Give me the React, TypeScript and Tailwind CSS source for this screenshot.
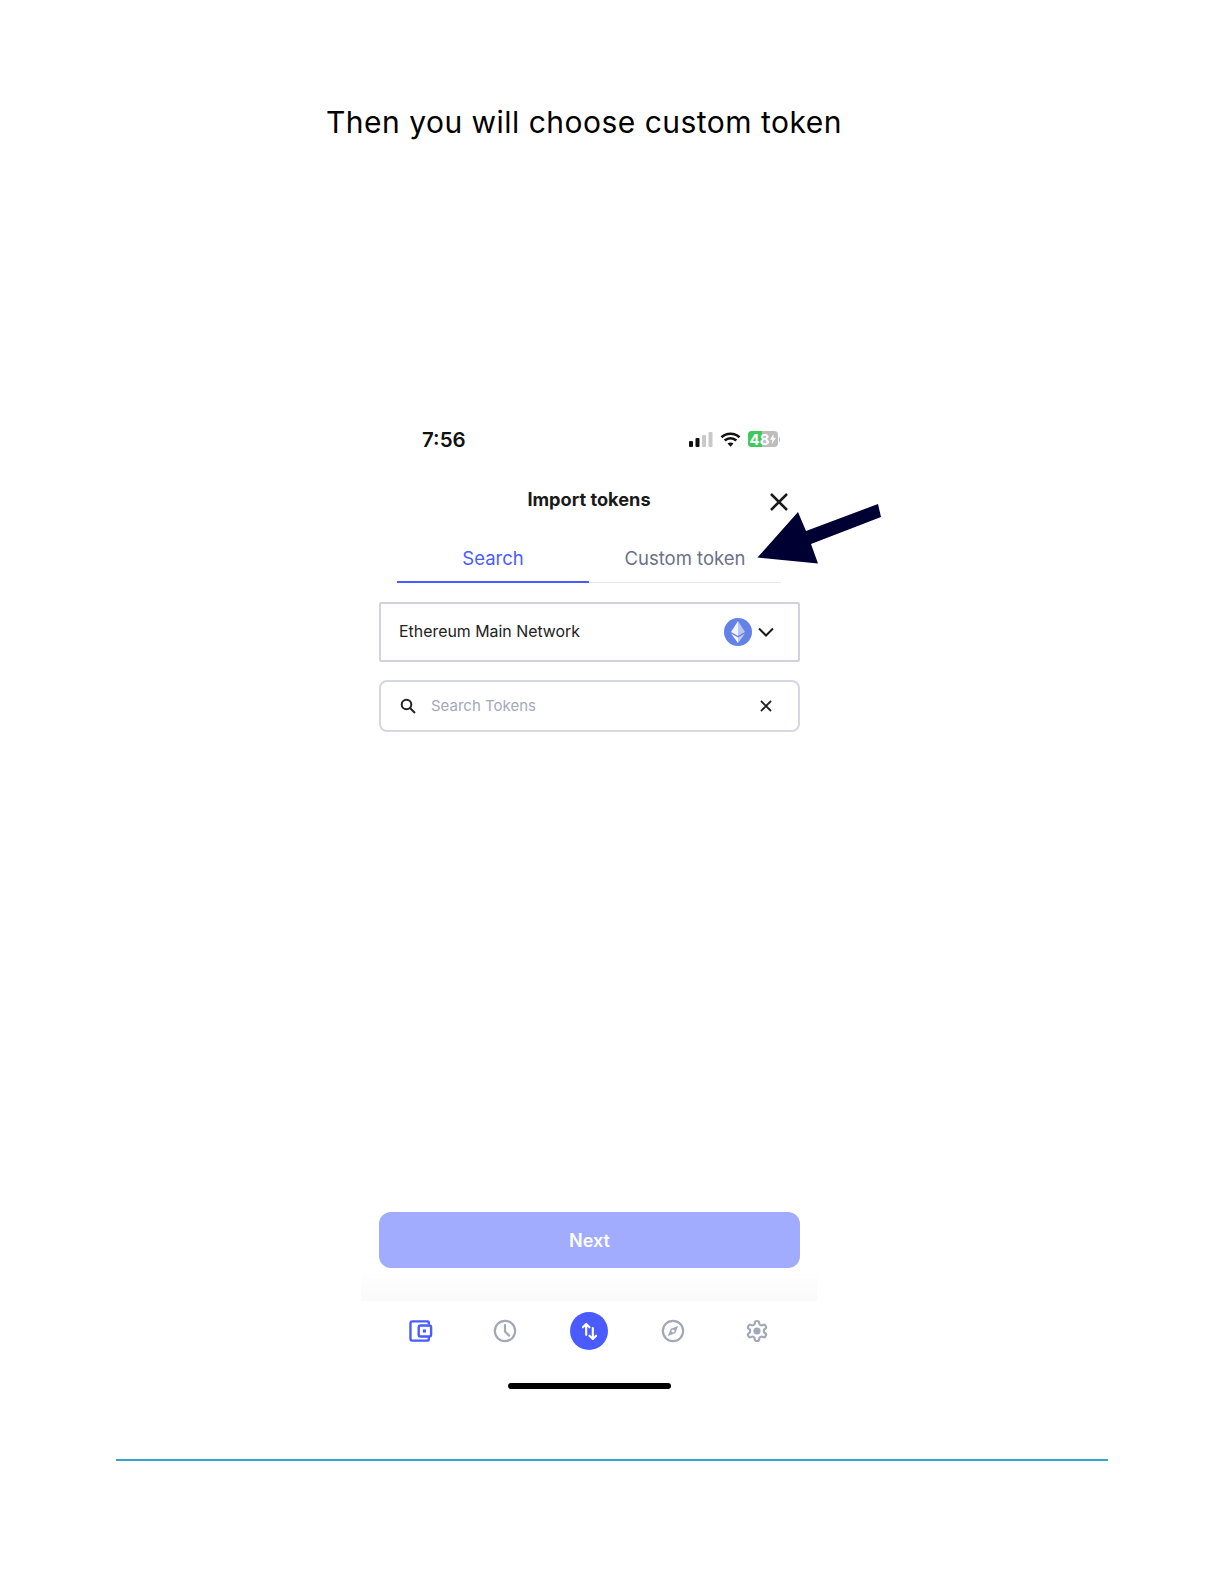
const appFont = { fontFamily: '"Inter", "Noto Sans", sans-serif' };

const NavIcons = () => (
  <div className="mx-[18px] grid h-[60px] grid-cols-5 items-center justify-items-center">
    <svg width="24" height="22" viewBox="0 0 26 24" fill="none" stroke="#4a5cff" strokeWidth="2.600">
      <path d="M21.500 5V2.500a1 1 0 0 0-1-1H3.500a2 2 0 0 0-2 2v17a2 2 0 0 0 2 2h17a1 1 0 0 0 1-1V18" />
      <rect x="10.500" y="6" width="13.500" height="12" rx="2" />
      <rect x="15" y="10.300" width="3.400" height="3.400" fill="#4a5cff" stroke="none" />
    </svg>
    <svg width="24" height="24" viewBox="0 0 26 26" fill="none" stroke="#a3a8b8" strokeWidth="2.400">
      <circle cx="13" cy="13" r="11" />
      <path d="M13 6.500V13.500L17.500 18" strokeLinecap="round" />
    </svg>
    <div className="flex h-[38px] w-[38px] items-center justify-center rounded-full bg-[#4a5cff]">
      <svg width="15" height="19" viewBox="0 0 18 22" fill="none" stroke="#ffffff" strokeWidth="2.600" strokeLinecap="round" strokeLinejoin="round">
        <path d="M5 15V2M1 6L5 2L9 6" />
        <path d="M13 7V20M9 16L13 20L17 16" />
      </svg>
    </div>
    <svg width="24" height="24" viewBox="0 0 26 26" fill="none" stroke="#a3a8b8" strokeWidth="2.400">
      <circle cx="13" cy="13" r="11" />
      <path d="M18.500 7.500L15.500 15.500L7.500 18.500L10.500 10.500Z" fill="#a3a8b8" stroke="none" />
      <circle cx="13" cy="13" r="1.700" fill="#ffffff" stroke="none" />
    </svg>
    <svg width="24" height="24" viewBox="0 0 24 24" fill="none" stroke="#a3a8b8" strokeWidth="2.200">
      <path d="M12.220 2h-.44a2 2 0 0 0-2 2v.18a2 2 0 0 1-1 1.730l-.43.25a2 2 0 0 1-2 0l-.15-.08a2 2 0 0 0-2.730.73l-.22.38a2 2 0 0 0 .73 2.730l.15.1a2 2 0 0 1 1 1.720v.51a2 2 0 0 1-1 1.740l-.15.09a2 2 0 0 0-.73 2.730l.22.38a2 2 0 0 0 2.730.73l.15-.08a2 2 0 0 1 2 0l.43.25a2 2 0 0 1 1 1.730V20a2 2 0 0 0 2 2h.44a2 2 0 0 0 2-2v-.18a2 2 0 0 1 1-1.730l.43-.25a2 2 0 0 1 2 0l.15.08a2 2 0 0 0 2.730-.73l.22-.39a2 2 0 0 0-.73-2.730l-.15-.08a2 2 0 0 1-1-1.740v-.5a2 2 0 0 1 1-1.740l.15-.09a2 2 0 0 0 .73-2.730l-.22-.38a2 2 0 0 0-2.730-.73l-.15.08a2 2 0 0 1-2 0l-.43-.25a2 2 0 0 1-1-1.730V4a2 2 0 0 0-2-2z" />
      <circle cx="12" cy="12" r="3.600" fill="#a3a8b8" stroke="none" />
    </svg>
  </div>
);

const StatusBar = () => (
  <div className="flex h-[30px] items-center justify-between pl-[61px] pr-[37px]">
    <span className="text-[20.500px] font-semibold text-[#111111]">7:56</span>
    <div className="mb-[2px] flex items-center">
      <svg width="24" height="15" viewBox="0 0 24 15" fill="#111111">
        <rect x="0" y="9" width="4" height="6" rx="1" />
        <rect x="6.500" y="6" width="4" height="9" rx="1" />
        <rect x="13" y="3" width="4" height="12" rx="1" fill="#c9c9c9" />
        <rect x="19.500" y="0" width="4" height="15" rx="1" fill="#c9c9c9" />
      </svg>
      <svg className="ml-[7px] mr-[1px]" width="21" height="15" viewBox="0 0 20 15" fill="none" stroke="#111111" strokeWidth="2.700">
        <path d="M1 5.200C6 .6 14 .6 19 5.200" />
        <path d="M4.200 8.500C7.500 5.500 12.500 5.500 15.800 8.500" />
        <path d="M10 14.800L7 11.500C8.800 10.200 11.200 10.200 13 11.500Z" fill="#111111" stroke="none" />
      </svg>
      <div className="relative ml-[6px] flex h-[16px] w-[30px] items-center overflow-hidden rounded-[4px] bg-[#bdbdbd] pl-[2px]">
        <div className="absolute inset-y-0 left-0 w-[14px] bg-[#3fc95a]" />
        <span className="relative text-[15px] font-bold leading-none text-white">48</span>
        <svg className="relative ml-[1px]" width="6" height="10" viewBox="0 0 6 10" fill="#ffffff">
          <path d="M3.600 0L0 5.800H2.400L1.800 10L6 3.800H3.400Z" />
        </svg>
      </div>
      <div className="ml-[1px] h-[5px] w-[1.500px] rounded-r bg-[#c4c4c4]" />
    </div>
  </div>
);

export default function App() {
  return (
    <div className="relative h-[1584px] w-[1224px] overflow-hidden bg-white">
      <h1
        className="pl-[326px] pt-[103px] text-[30px] font-normal leading-[38px] tracking-[0.480px] text-black"
        style={{ fontFamily: '"Inter", sans-serif' }}
      >
        Then you will choose custom token
      </h1>

      <div className="ml-[361px] mt-[284px] w-[456px]" style={appFont}>
        <StatusBar />

        <div className="relative mt-[30px] flex h-[30px] items-center justify-center">
          <span className="text-[18.200px] font-bold text-[#1a1a1a]">Import tokens</span>
          <svg className="absolute left-[408px] top-[7px]" width="20" height="20" viewBox="0 0 20 20" stroke="#1a1a1a" strokeWidth="2.500">
            <path d="M2 2L18 18M18 2L2 18" />
          </svg>
        </div>

        <div className="mx-[36px] mt-[21px] flex h-[47px] border-b border-[#e4e6ee]">
          <div className="-mb-px flex w-1/2 items-center justify-center border-b-2 border-[#4a5cff] text-[18.500px] text-[#4a5cff]">
            Search
          </div>
          <div className="-mb-px flex w-1/2 items-center justify-center border-b-2 border-transparent text-[18.500px] text-[#6b7186]">
            Custom token
          </div>
        </div>

        <div className="ml-[18px] mr-[17px] mt-[19px] flex h-[60px] items-center rounded-[2px] border-2 border-[#d0d2e2] pl-[18px] pr-[24px]">
          <span className="flex-1 text-[15.900px] text-[#222222]">Ethereum Main Network</span>
          <div className="flex h-[28px] w-[28px] items-center justify-center rounded-full bg-[#6481e7]">
            <svg width="14" height="22" viewBox="0 0 14 22">
              <path d="M7 0L0 11L7 15Z" fill="#ffffff" fillOpacity="0.9" />
              <path d="M7 0L14 11L7 15Z" fill="#ffffff" fillOpacity="0.55" />
              <path d="M0 12.500L7 22V16.500Z" fill="#ffffff" fillOpacity="0.95" />
              <path d="M14 12.500L7 22V16.500Z" fill="#ffffff" fillOpacity="0.6" />
            </svg>
          </div>
          <svg className="ml-[6px]" width="16" height="10" viewBox="0 0 16 10" fill="none" stroke="#1a1a1a" strokeWidth="2">
            <path d="M1 1.500L8 8.500L15 1.500" />
          </svg>
        </div>

        <div className="ml-[18px] mr-[17px] mt-[18px] flex h-[52px] items-center rounded-[8px] border-2 border-[#d5d7e2] pl-[19px] pr-[26px]">
          <svg width="16" height="16" viewBox="0 0 16 16" fill="none" stroke="#222222" strokeWidth="2">
            <circle cx="6.500" cy="6.500" r="4.800" />
            <path d="M10 10L15 15" />
          </svg>
          <span className="ml-[15px] flex-1 text-[15px] text-[#a4a8bb]">Search Tokens</span>
          <svg width="12" height="12" viewBox="0 0 12 12" stroke="#222222" strokeWidth="1.800">
            <path d="M1 1L11 11M11 1L1 11" />
          </svg>
        </div>

        <div className="ml-[18px] mr-[17px] mt-[480px] flex h-[56px] items-center justify-center rounded-[12px] bg-[#a1acff] text-[18px] font-semibold text-white">
          Next
        </div>

        <div className="h-[33px] bg-gradient-to-b from-white to-[#fafafa]" />
        <NavIcons />

        <div className="mx-auto mt-[22px] h-[6px] w-[163px] rounded-full bg-black" />
      </div>

      <div className="ml-[116px] mt-[70px] h-[2px] w-[992px] bg-[#36a5c9]" />

      {/* annotation arrow over the tab */}
      <svg className="absolute left-[750px] top-[500px]" width="135" height="70" viewBox="750 500 135 70" fill="#000033">
        <path d="M757.500 557.500L798 512L806 531L878 504L881 517L811 544L818 563.500Z" />
      </svg>
    </div>
  );
}
